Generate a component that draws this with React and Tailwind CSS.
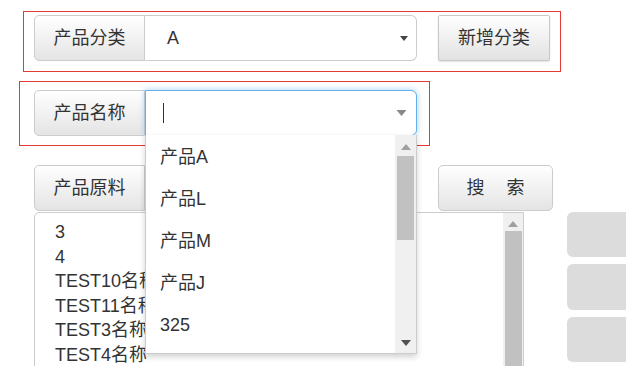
import React from 'react';

const font = { fontFamily: '"Liberation Sans", "Noto Sans CJK SC", sans-serif' };

const addon =
  'w-[111px] h-[46px] shrink-0 flex items-center justify-center border border-[#ccc] rounded-l-[5px] bg-gradient-to-b from-white to-[#e4e4e4] text-[18px] text-[#333]';

const Tri = ({ className, w = 10, h = 6, color = '#555' }) => (
  <svg width={w} height={h} viewBox="0 0 10 6" className={className}>
    <path d="M0 0 L10 0 L5 6 Z" fill={color} />
  </svg>
);

const TriUp = ({ color = '#a0a0a0' }) => (
  <svg width="10" height="6" viewBox="0 0 10 6">
    <path d="M5 0 L10 6 L0 6 Z" fill={color} />
  </svg>
);

const products = ['产品A', '产品L', '产品M', '产品J', '325'];
const materials = ['3', '4', 'TEST10名称', 'TEST11名称', 'TEST3名称', 'TEST4名称'];

export default function App() {
  return (
    <div className="relative w-[626px] h-[366px] overflow-hidden bg-white text-[#333]" style={font}>
      {/* 产品分类 */}
      <div className="ml-[23px] mt-[11px] w-[538px] h-[61px] border border-[#e53935] pl-[10px] pt-[3px] flex">
        <div className={addon}>产品分类</div>
        <div className="w-[272px] h-[46px] shrink-0 border border-l-0 border-[#ccc] rounded-r-[6px] bg-white flex items-center justify-between pl-[22px] pr-[8px] text-[18px]">
          <span>A</span>
          <Tri w={8} h={7} color="#444" />
        </div>
        <button className="ml-[21px] w-[112px] h-[46px] shrink-0 border border-[#c8c8c8] rounded-[2px] bg-gradient-to-b from-white to-[#e2e2e2] shadow-[0_1px_2px_rgba(0,0,0,0.12)] text-[18px] text-[#333]">
          新增分类
        </button>
      </div>

      {/* 产品名称 */}
      <div className="ml-[19px] mt-[9px] w-[411px] h-[65px] border border-[#e53935] pl-[14px] pt-[8px] flex">
        <div className={addon}>产品名称</div>
        <div className="w-[272px] h-[46px] shrink-0 border border-[#66afe9] rounded-r-[6px] bg-white shadow-[0_0_6px_rgba(102,175,233,0.6)] flex items-center justify-between pl-[17px] pr-[9px]">
          <span className="w-px h-[20px] bg-[#333]" />
          <Tri w={11} h={6} color="#888" />
        </div>
      </div>

      {/* 产品原料 */}
      <div className="ml-[34px] mt-[19px] flex">
        <div className={addon}>产品原料</div>
        <div className="w-[272px] h-[46px] shrink-0 border border-l-0 border-[#ccc] rounded-r-[5px] bg-white" />
        <button className="ml-[21px] w-[115px] h-[46px] shrink-0 border border-[#ccc] rounded-[5px] bg-gradient-to-b from-white to-[#e4e4e4] text-[18px] text-[#333] tracking-[22px] pl-[22px]">
          搜索
        </button>
      </div>

      <div className="flex mt-[1px]">
        <div className="ml-[34px] w-[490px] h-[160px] shrink-0 border border-[#ccc] rounded-tl-[5px] flex">
          <div className="flex-1 pl-[20px] pt-[7px] text-[18px] leading-[24.5px] overflow-hidden">
            {materials.map((m) => (
              <div key={m} className="whitespace-nowrap">{m}</div>
            ))}
          </div>
          <div className="w-[20px] bg-[#f0f0f0] flex flex-col items-center pt-[8px]">
            <TriUp />
            <div className="mt-[4px] w-[17px] flex-1 bg-[#c1c1c1]" />
          </div>
        </div>
        <div className="ml-[43px] shrink-0 flex flex-col gap-[7px]">
          <div className="w-[80px] h-[45px] rounded-[6px] bg-[#dcdcdc]" />
          <div className="w-[80px] h-[46px] rounded-[6px] bg-[#dcdcdc]" />
          <div className="w-[80px] h-[45px] rounded-[6px] bg-[#dcdcdc]" />
        </div>
      </div>

      {/* dropdown list */}
      <div className="absolute left-[145px] top-[135px] w-[272px] h-[219px] border border-t-0 border-[#ccc] bg-white shadow-[0_3px_6px_rgba(0,0,0,0.18)] flex">
        <div className="flex-1 pt-[1px]">
          {products.map((p) => (
            <div key={p} className="h-[42px] flex items-center pl-[14px] text-[18px] text-[#333]">
              {p}
            </div>
          ))}
        </div>
        <div className="w-[21px] bg-[#f0f0f0] flex flex-col items-center pt-[9px] pb-[7px]">
          <TriUp />
          <div className="mt-[6px] w-[17px] h-[84px] bg-[#c1c1c1]" />
          <div className="flex-1" />
          <Tri w={10} h={6} color="#505050" />
        </div>
      </div>
    </div>
  );
}
